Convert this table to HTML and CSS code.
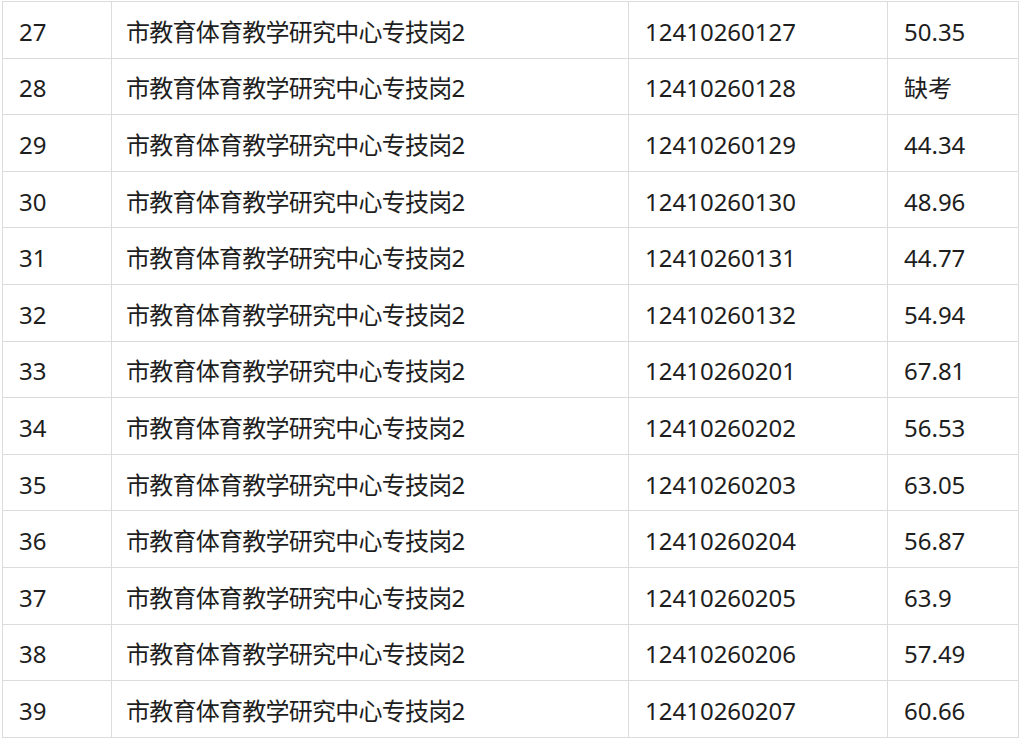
FILE: index.html
```html
<!DOCTYPE html>
<html lang="zh-CN">
<head>
<meta charset="utf-8">
<link rel="stylesheet" href="styles.css">
</head>
<body>
<table class="score-table">
<colgroup>
<col class="c-no"><col class="c-post"><col class="c-id"><col class="c-score">
</colgroup>
<tbody>
<tr><td>27</td><td class="post">市教育体育教学研究中心专技岗2</td><td>12410260127</td><td>50.35</td></tr>
<tr><td>28</td><td class="post">市教育体育教学研究中心专技岗2</td><td>12410260128</td><td>缺考</td></tr>
<tr><td>29</td><td class="post">市教育体育教学研究中心专技岗2</td><td>12410260129</td><td>44.34</td></tr>
<tr><td>30</td><td class="post">市教育体育教学研究中心专技岗2</td><td>12410260130</td><td>48.96</td></tr>
<tr><td>31</td><td class="post">市教育体育教学研究中心专技岗2</td><td>12410260131</td><td>44.77</td></tr>
<tr><td>32</td><td class="post">市教育体育教学研究中心专技岗2</td><td>12410260132</td><td>54.94</td></tr>
<tr><td>33</td><td class="post">市教育体育教学研究中心专技岗2</td><td>12410260201</td><td>67.81</td></tr>
<tr><td>34</td><td class="post">市教育体育教学研究中心专技岗2</td><td>12410260202</td><td>56.53</td></tr>
<tr><td>35</td><td class="post">市教育体育教学研究中心专技岗2</td><td>12410260203</td><td>63.05</td></tr>
<tr><td>36</td><td class="post">市教育体育教学研究中心专技岗2</td><td>12410260204</td><td>56.87</td></tr>
<tr><td>37</td><td class="post">市教育体育教学研究中心专技岗2</td><td>12410260205</td><td>63.9</td></tr>
<tr><td>38</td><td class="post">市教育体育教学研究中心专技岗2</td><td>12410260206</td><td>57.49</td></tr>
<tr><td>39</td><td class="post">市教育体育教学研究中心专技岗2</td><td>12410260207</td><td>60.66</td></tr>
</tbody>
</table>
</body>
</html>
```
FILE: styles.css
```css
html, body {
  margin: 0;
  padding: 0;
  background: #ffffff;
}
body {
  padding: 1px 0 0 2px;
  font-family: "Noto Sans", "Noto Sans CJK SC", sans-serif;
  font-size: 24px;
  color: #1e1e1e;
}
.score-table {
  border-collapse: collapse;
  table-layout: fixed;
  width: 1016px;
}
.c-no { width: 109px; }
.c-post { width: 517px; }
.c-id { width: 259px; }
.c-score { width: 131px; }
.score-table td {
  border: 1px solid #dcdcdc;
  height: 56.6px;
  padding: 4px 0 0 16px;
  box-sizing: border-box;
  white-space: nowrap;
  vertical-align: middle;
  line-height: 1;
}
.score-table td.post {
  padding-left: 14px;
  letter-spacing: -0.75px;
}
```
